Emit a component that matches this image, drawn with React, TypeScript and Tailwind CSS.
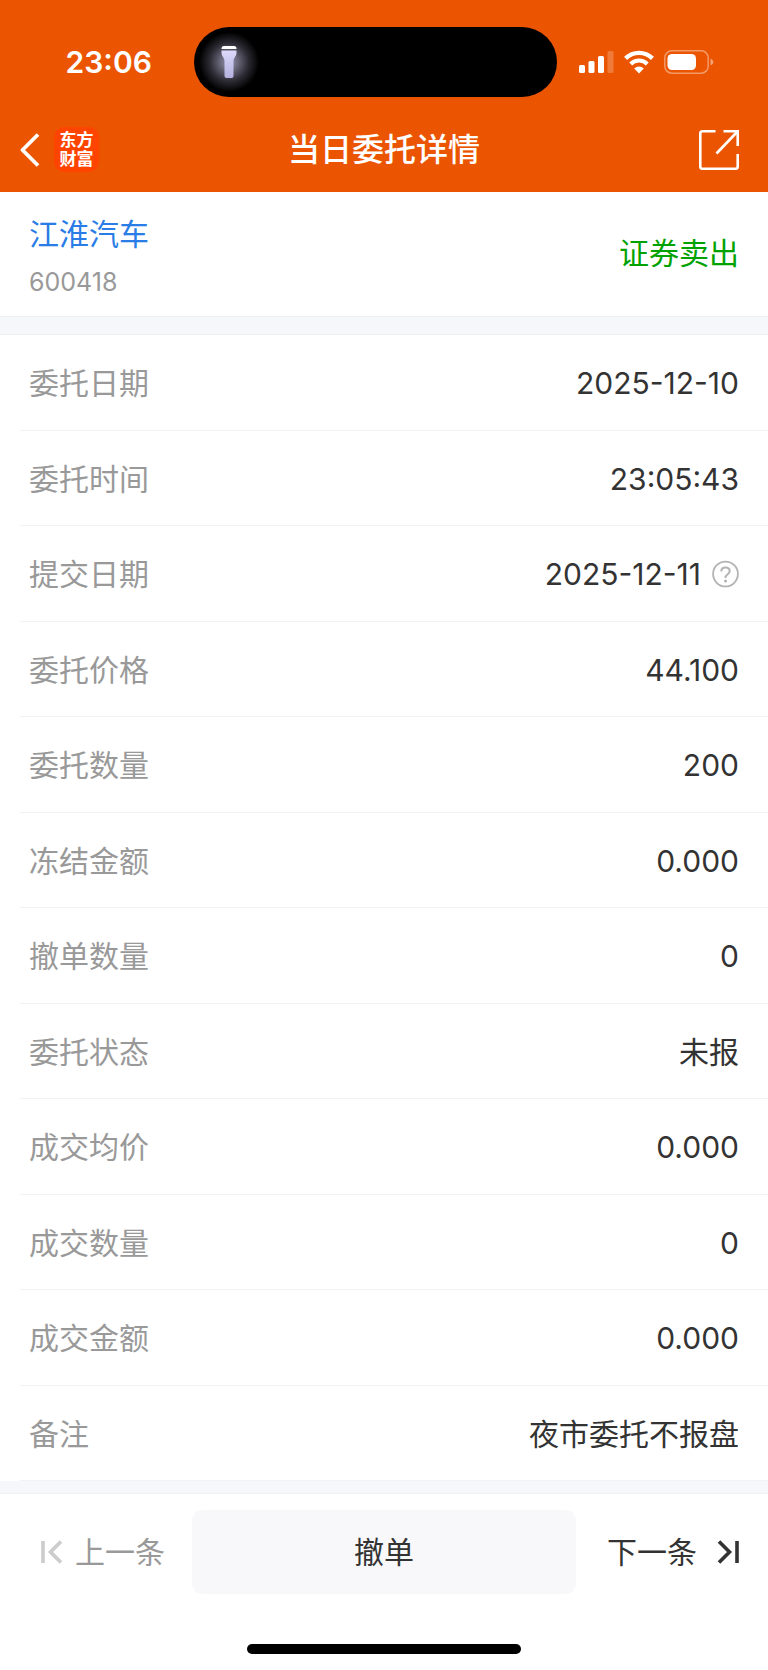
import type { ReactNode } from 'react';

const DETAILS = [
  { label: '委托日期', value: '2025-12-10' },
  { label: '委托时间', value: '23:05:43' },
  { label: '提交日期', value: '2025-12-11', help: true },
  { label: '委托价格', value: '44.100' },
  { label: '委托数量', value: '200' },
  { label: '冻结金额', value: '0.000' },
  { label: '撤单数量', value: '0' },
  { label: '委托状态', value: '未报' },
  { label: '成交均价', value: '0.000' },
  { label: '成交数量', value: '0' },
  { label: '成交金额', value: '0.000' },
  { label: '备注', value: '夜市委托不报盘' },
];

function SignalIcon() {
  return (
    <svg width="35" height="24" viewBox="0 0 35 24" fill="#fff">
      <rect x="0" y="15" width="6" height="8" rx="1.5" />
      <rect x="9.5" y="11" width="6" height="12" rx="1.5" />
      <rect x="19" y="6" width="6" height="17" rx="1.5" />
      <rect x="28.5" y="1" width="6" height="22" rx="1.5" fillOpacity="0.22" />
    </svg>
  );
}

function WifiIcon() {
  return (
    <svg width="30" height="24" viewBox="0 0 30 24" fill="none" stroke="#fff" strokeWidth="4.4">
      <path d="M1.6 8.4 A19 19 0 0 1 28.4 8.4" />
      <path d="M6.7 14 A11.7 11.7 0 0 1 23.3 14" strokeWidth="4" />
      <path d="M15 23.4 L10.2 18.6 A6.8 6.8 0 0 1 19.8 18.6 Z" fill="#fff" stroke="none" />
    </svg>
  );
}

function BatteryIcon() {
  return (
    <svg width="50" height="24" viewBox="0 0 50 24" fill="none">
      <rect x="0.8" y="0.8" width="43.4" height="22.4" rx="7" stroke="#fff" strokeOpacity="0.4" strokeWidth="1.5" />
      <rect x="3.5" y="4" width="28.5" height="16" rx="4.5" fill="#fff" />
      <path d="M46.5 8.5 Q49.5 10 49.5 12 Q49.5 14 46.5 15.5 Z" fill="#fff" fillOpacity="0.45" />
    </svg>
  );
}

function FlashlightIcon() {
  return (
    <svg width="70" height="70" viewBox="0 0 70 70">
      <defs>
        <radialGradient id="glow">
          <stop offset="0" stopColor="#9a98b8" />
          <stop offset="0.3" stopColor="#686678" />
          <stop offset="0.65" stopColor="#2b2a32" />
          <stop offset="1" stopColor="#000" />
        </radialGradient>
        <linearGradient id="body" x1="0" y1="0" x2="0" y2="1">
          <stop offset="0" stopColor="#dcd9fb" />
          <stop offset="1" stopColor="#b4b1e0" />
        </linearGradient>
      </defs>
      <circle cx="35" cy="35" r="30" fill="url(#glow)" />
      <path d="M27.5 22 Q27.5 19 30 19 H40 Q42.5 19 42.5 22 Z" fill="#fff" />
      <path
        d="M27.5 23.5 H42.5 V26 Q42.5 28 41 30 Q39.5 32 39.5 34 V49 Q39.5 51 37.5 51 H32.5 Q30.5 51 30.5 49 V34 Q30.5 32 29 30 Q27.5 28 27.5 26 Z"
        fill="url(#body)"
      />
    </svg>
  );
}

function StatusBar() {
  return (
    <div className="flex items-center pt-[27px] pr-5">
      <div className="flex-1 pl-6 text-center text-[30px] leading-[36px] font-semibold">23:06</div>
      <div className="flex h-[70px] w-[363px] items-center rounded-full bg-black">
        <FlashlightIcon />
      </div>
      <div className="flex flex-1 items-center gap-2.5 pl-[22px]">
        <SignalIcon />
        <WifiIcon />
        <BatteryIcon />
      </div>
    </div>
  );
}

function TitleBar() {
  return (
    <div className="grid flex-1 grid-cols-[1fr_auto_1fr] items-center px-5 pt-2.5">
      <div className="flex items-center gap-3.5">
        <button type="button" aria-label="返回">
          <svg width="20" height="34" viewBox="0 0 20 34" fill="none" stroke="#fff" strokeWidth="3.8">
            <path d="M18 1.5 L2.5 17 L18 32.5" strokeLinejoin="round" />
          </svg>
        </button>
        <a
          href="#"
          className="flex size-[45px] flex-col items-center justify-center rounded-[10px] bg-[#ff4400] text-[17px] leading-[19px] font-bold"
        >
          <span>东方</span>
          <span>财富</span>
        </a>
      </div>
      <h1 className="text-[32px] leading-[40px] font-medium">当日委托详情</h1>
      <button type="button" aria-label="分享" className="mr-2 justify-self-end">
        <svg width="42" height="42" viewBox="0 0 42 42" fill="none" stroke="#fff" strokeWidth="2.6">
          <path d="M17.5 2.3 H4.5 Q2.3 2.3 2.3 4.5 V37.5 Q2.3 39.7 4.5 39.7 H37.5 Q39.7 39.7 39.7 37.5 V25" />
          <path d="M25.5 2.3 H39.7 V17" />
          <path d="M39.5 2.5 L18.5 24.5" />
        </svg>
      </button>
    </div>
  );
}

function HelpIcon() {
  return (
    <svg width="28" height="28" viewBox="0 0 28 28" fill="none" stroke="#b3b3b3">
      <circle cx="14.5" cy="14" r="12.4" strokeWidth="1.8" />
      <path d="M10.3 11.4 Q10.3 7.4 14.5 7.4 Q18.7 7.4 18.7 11 Q18.7 12.8 16.7 14.2 Q14.5 15.7 14.5 18" strokeWidth="2" />
      <circle cx="14.5" cy="20.9" r="1.5" fill="#b3b3b3" stroke="none" />
    </svg>
  );
}

function DetailRow({ label, children }: { label: string; children: ReactNode }) {
  return (
    <div className="ml-5 flex flex-1 items-center justify-between border-b border-[#f2f2f4] pt-0.5 pr-[29px] pl-[9px]">
      <dt className="text-[#999999]">{label}</dt>
      <dd className="flex items-center gap-2.5 text-[#333333]">{children}</dd>
    </div>
  );
}

export default function App() {
  return (
    <div className="flex min-h-screen flex-col bg-white font-[Inter,'Noto_Sans_CJK_SC',sans-serif] text-[30px] leading-[40px]">
      <header className="flex h-48 flex-col bg-[#eb5502] text-white">
        <StatusBar />
        <TitleBar />
      </header>

      <section className="flex h-[124px] items-center justify-between px-[29px]">
        <div className="flex flex-col gap-3 pt-1">
          <a href="#" className="text-[#2a7de6]">
            江淮汽车
          </a>
          <span className="text-[25px] leading-[32px] text-[#999999]">600418</span>
        </div>
        <span className="pb-0.5 text-[#00a200]">证券卖出</span>
      </section>
      <div className="h-[19px] border-y border-[#eeeff1] bg-[#f6f7fa]" />

      <dl className="flex flex-1 flex-col">
        {DETAILS.map((item) => (
          <DetailRow key={item.label} label={item.label}>
            {item.value}
            {item.help && (
              <button type="button" aria-label="提交日期说明">
                <HelpIcon />
              </button>
            )}
          </DetailRow>
        ))}
      </dl>
      <div className="h-[13px] border-b border-[#f1f2f4] bg-[#f6f7fa]" />

      <footer className="flex h-44 flex-col items-center justify-between pt-4 pb-4">
        <div className="grid h-[84px] w-full grid-cols-[1fr_2fr_1fr]">
          <button type="button" disabled className="flex items-center justify-end gap-3 pr-[27px] text-[#999999]">
            <svg width="22" height="24" viewBox="0 0 22 24" fill="none" stroke="#cccccc" strokeWidth="3.6">
              <path d="M2 1 V23" />
              <path d="M20 1.5 L9.5 12 L20 22.5" />
            </svg>
            上一条
          </button>
          <button type="button" className="rounded-[10px] bg-[#f8f8fb] text-[#333333]">
            撤单
          </button>
          <button type="button" className="flex items-center justify-end gap-5 pr-[29px] text-[#333333]">
            下一条
            <svg width="22" height="24" viewBox="0 0 22 24" fill="none" stroke="#333333" strokeWidth="3.6">
              <path d="M20 1 V23" />
              <path d="M2 1.5 L12.5 12 L2 22.5" />
            </svg>
          </button>
        </div>
        <div className="h-2.5 w-[274px] rounded-full bg-black" />
      </footer>
    </div>
  );
}
